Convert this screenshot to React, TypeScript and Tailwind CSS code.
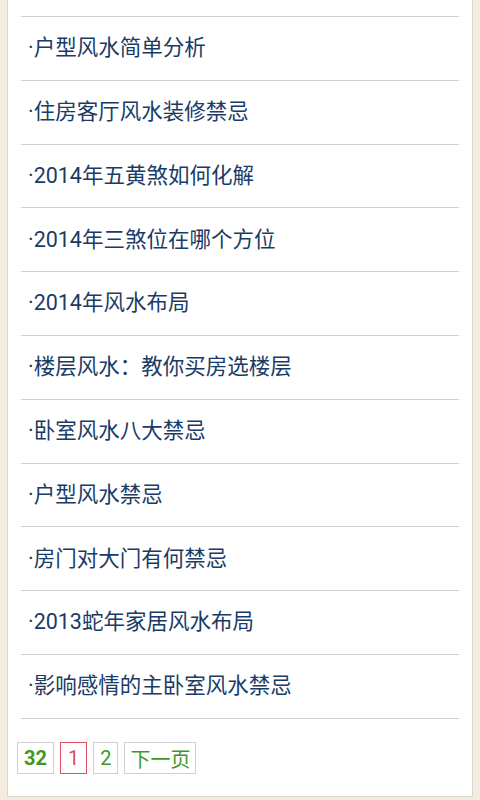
const items = [
  "户型风水简单分析",
  "住房客厅风水装修禁忌",
  "2014年五黄煞如何化解",
  "2014年三煞位在哪个方位",
  "2014年风水布局",
  "楼层风水：教你买房选楼层",
  "卧室风水八大禁忌",
  "户型风水禁忌",
  "房门对大门有何禁忌",
  "2013蛇年家居风水布局",
  "影响感情的主卧室风水禁忌",
];

export default function App() {
  return (
    <div
      className="h-[800px] w-[480px] overflow-hidden bg-[#f4ecdf]"
      style={{ fontFamily: '"Roboto", "Noto Sans CJK SC", sans-serif' }}
    >
      <div className="mx-[7px] -mt-px h-[798px] border border-[#d9d6d0] bg-white">
        <ul className="mx-[13px] pt-[16px]">
          {items.map((t) => (
            <li
              key={t}
              className="flex h-[63.8px] items-center border-t border-[#d2d2d2] pl-[7px] text-[21.5px] text-[#1a3b66]"
            >
              ·{t}
            </li>
          ))}
          <li className="border-t border-[#d2d2d2]" />
        </ul>
        <div className="mt-[23px] flex gap-[6px] pl-[9px] text-[20px] leading-none">
          <span className="flex h-[32px] items-center border border-[#d0d0d0] px-[6px] font-bold text-[#3d9a1f]">
            32
          </span>
          <span className="flex h-[32px] items-center border border-[#e0505a] px-[7px] text-[#e0505a]">
            1
          </span>
          <span className="flex h-[32px] items-center border border-[#d0d0d0] px-[6px] text-[#3d9a1f]">
            2
          </span>
          <span className="flex h-[32px] items-center border border-[#d0d0d0] px-[5px] pt-[4px] text-[#3d9a1f]">
            下一页
          </span>
        </div>
      </div>
    </div>
  );
}
